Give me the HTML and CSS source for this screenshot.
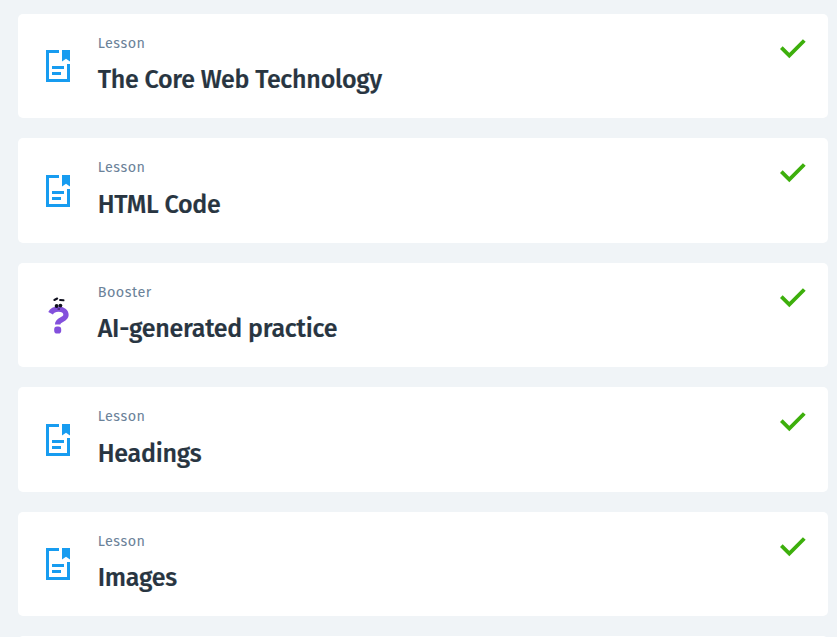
FILE: index.html
```html
<!DOCTYPE html>
<html lang="en">
<head>
<meta charset="utf-8">
<title>Lessons</title>
<link rel="stylesheet" href="styles.css">
</head>
<body>
<svg class="defs" width="0" height="0">
  <symbol id="doc" viewBox="0 0 24 32">
    <path d="M13 1.5H1.5v29h21V14" fill="none" stroke="#179cf0" stroke-width="3"/>
    <path d="M16 0h8v11.5l-4-2.8-4 2.8z" fill="#179cf0"/>
    <path d="M6 17.5h12M6 23.5h9" stroke="#179cf0" stroke-width="2.8"/>
  </symbol>
  <symbol id="quiz" viewBox="0 0 24 38">
    <path d="M4.6 17.2C6 14.6 9 13.2 12.4 13.2c4.6 0 7.6 2.2 7.6 5.8 0 5-8.4 4.4-8.4 9.4" fill="none" stroke="#8350dc" stroke-width="5.3"/>
    <rect x="8.2" y="30.6" width="7" height="7" rx="2.8" fill="#8350dc"/>
    <circle cx="10.6" cy="10" r="1.9" fill="#10101f"/><circle cx="14.4" cy="9.6" r="1.9" fill="#10101f"/>
    <path d="M11.6 13h2.4" stroke="#352052" stroke-width="1.2"/>
    <path d="M8.4 4l2.8-1.5M14.1 4l3.4.3" stroke="#10101f" stroke-width="2" stroke-linecap="round"/>
  </symbol>
  <symbol id="check" viewBox="0 0 26 20">
    <path d="M1.3 8.6l8 8L24.3 1.5" fill="none" stroke="#3daf0c" stroke-width="3.9"/>
  </symbol>
</svg>
<main class="list">
  <article class="card"><svg class="icon"><use href="#doc"/></svg><div class="text"><p class="kind">Lesson</p><h2 class="title">The Core Web Technology</h2></div><svg class="check"><use href="#check"/></svg></article>
  <article class="card"><svg class="icon"><use href="#doc"/></svg><div class="text"><p class="kind">Lesson</p><h2 class="title">HTML Code</h2></div><svg class="check"><use href="#check"/></svg></article>
  <article class="card"><svg class="icon quiz"><use href="#quiz"/></svg><div class="text"><p class="kind">Booster</p><h2 class="title">AI-generated practice</h2></div><svg class="check"><use href="#check"/></svg></article>
  <article class="card"><svg class="icon"><use href="#doc"/></svg><div class="text"><p class="kind">Lesson</p><h2 class="title">Headings</h2></div><svg class="check"><use href="#check"/></svg></article>
  <article class="card"><svg class="icon"><use href="#doc"/></svg><div class="text"><p class="kind">Lesson</p><h2 class="title">Images</h2></div><svg class="check"><use href="#check"/></svg></article>
  <article class="card"></article>
</main>
</body>
</html>
```
FILE: styles.css
```css
* { box-sizing: border-box; }
html, body { height: 100%; }
body {
  margin: 0;
  background: #f0f4f7;
  font-family: "Fira Sans", "Open Sans", "Noto Sans", sans-serif;
}
.defs { display: none; }
.list {
  display: flex;
  flex-direction: column;
  gap: 20px;
  height: 100%;
  padding: 14px 9px 0 18px;
  overflow: hidden;
}
.card {
  display: flex;
  flex: none;
  align-items: flex-start;
  height: 104.45px;
  padding: 0 22px 0 28px;
  border-radius: 5px;
  background: #fff;
}
.icon { flex: none; width: 24px; height: 32px; margin-top: 36.2px; }
.icon.quiz { height: 38px; margin-top: 33px; }
.text { flex: 1; padding: 19.75px 0 0 27.7px; }
.kind {
  margin: 0;
  color: #6b8299;
  font-size: 14.4px;
  line-height: 20px;
  letter-spacing: 0.5px;
}
.title {
  margin: 9.55px 0 0;
  color: #283541;
  font-size: 25px;
  font-weight: 500;
  line-height: 34px;
  letter-spacing: -0.24px;
  white-space: nowrap;
  -webkit-text-stroke: 0.2px #283541;
}
.check { flex: none; width: 26px; height: 20px; margin-top: 24.75px; }
```
